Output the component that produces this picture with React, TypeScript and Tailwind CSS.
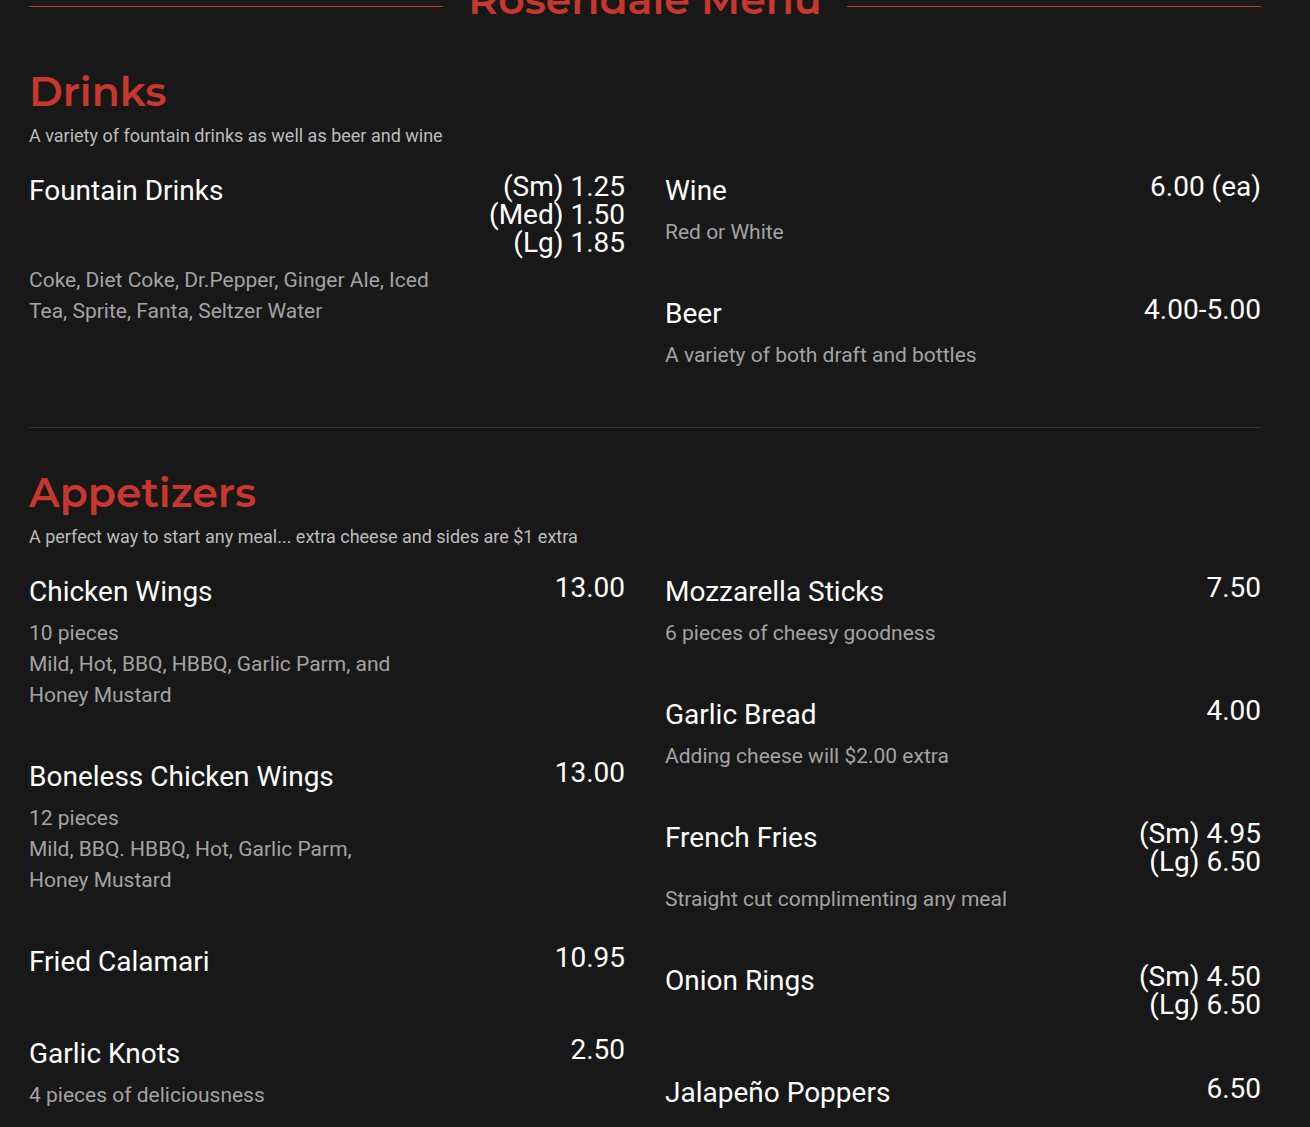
type Item = {
  name: string;
  prices: string[];
  desc: string[];
};

type Section = {
  title: string;
  subtitle: string;
  left: Item[];
  right: Item[];
};

const sections: Section[] = [
  {
    title: "Drinks",
    subtitle: "A variety of fountain drinks as well as beer and wine",
    left: [
      {
        name: "Fountain Drinks",
        prices: ["(Sm) 1.25", "(Med) 1.50", "(Lg) 1.85"],
        desc: ["Coke, Diet Coke, Dr.Pepper, Ginger Ale, Iced", "Tea, Sprite, Fanta, Seltzer Water"],
      },
    ],
    right: [
      { name: "Wine", prices: ["6.00 (ea)"], desc: ["Red or White"] },
      { name: "Beer", prices: ["4.00-5.00"], desc: ["A variety of both draft and bottles"] },
    ],
  },
  {
    title: "Appetizers",
    subtitle: "A perfect way to start any meal... extra cheese and sides are $1 extra",
    left: [
      {
        name: "Chicken Wings",
        prices: ["13.00"],
        desc: ["10 pieces", "Mild, Hot, BBQ, HBBQ, Garlic Parm, and", "Honey Mustard"],
      },
      {
        name: "Boneless Chicken Wings",
        prices: ["13.00"],
        desc: ["12 pieces", "Mild, BBQ. HBBQ, Hot, Garlic Parm,", "Honey Mustard"],
      },
      { name: "Fried Calamari", prices: ["10.95"], desc: [] },
      { name: "Garlic Knots", prices: ["2.50"], desc: ["4 pieces of deliciousness"] },
    ],
    right: [
      { name: "Mozzarella Sticks", prices: ["7.50"], desc: ["6 pieces of cheesy goodness"] },
      { name: "Garlic Bread", prices: ["4.00"], desc: ["Adding cheese will $2.00 extra"] },
      {
        name: "French Fries",
        prices: ["(Sm) 4.95", "(Lg) 6.50"],
        desc: ["Straight cut complimenting any meal"],
      },
      { name: "Onion Rings", prices: ["(Sm) 4.50", "(Lg) 6.50"], desc: [] },
      { name: "Jalapeño Poppers", prices: ["6.50"], desc: [] },
    ],
  },
];

const heading = "font-['Montserrat','Open_Sans',sans-serif] font-semibold text-[#c8372d]";

const MenuItem = ({ item }: { item: Item }) => (
  <div className="pb-12">
    <div className="flex justify-between items-start text-white">
      <h3 className="text-[28px] leading-[36px]">{item.name}</h3>
      <div className="text-right text-[28px] leading-[28px]">
        {item.prices.map((p) => (
          <div key={p}>{p}</div>
        ))}
      </div>
    </div>
    <div className="mt-2 text-[21px] leading-[31px] text-[#a3a3a3]">
      {item.desc.map((d) => (
        <p key={d}>{d}</p>
      ))}
    </div>
  </div>
);

const App = () => {
  return (
    <div className="h-[1127px] overflow-hidden bg-[#181818] font-['Roboto',sans-serif]">
      <div className="w-[1232px] ml-[29px]">
        <div className="flex items-center -mt-[21px]">
          <div className="flex-1 h-px bg-[#c23d32] mt-[14px]"></div>
          <h1 className={`${heading} text-[41px] leading-none px-[25px]`}>Rosendale Menu</h1>
          <div className="flex-1 h-px bg-[#c23d32] mt-[14px]"></div>
        </div>

        {sections.map((s, i) => (
          <section key={s.title} className={i === 0 ? "pt-[44px]" : "pt-[37px]"}>
            <h2 className={`${heading} text-[41px] leading-[54px]`}>{s.title}</h2>
            <p className="mt-[6px] text-[18px] leading-[24px] text-[#bdbdbd]">{s.subtitle}</p>
            <div className="grid grid-cols-2 gap-x-10 mt-[25px]">
              <div>
                {s.left.map((it) => (
                  <MenuItem key={it.name} item={it} />
                ))}
              </div>
              <div>
                {s.right.map((it) => (
                  <MenuItem key={it.name} item={it} />
                ))}
              </div>
            </div>
            {i === 0 && <hr className="mt-2 border-[#333333]" />}
          </section>
        ))}
      </div>
    </div>
  );
};

export default App;
